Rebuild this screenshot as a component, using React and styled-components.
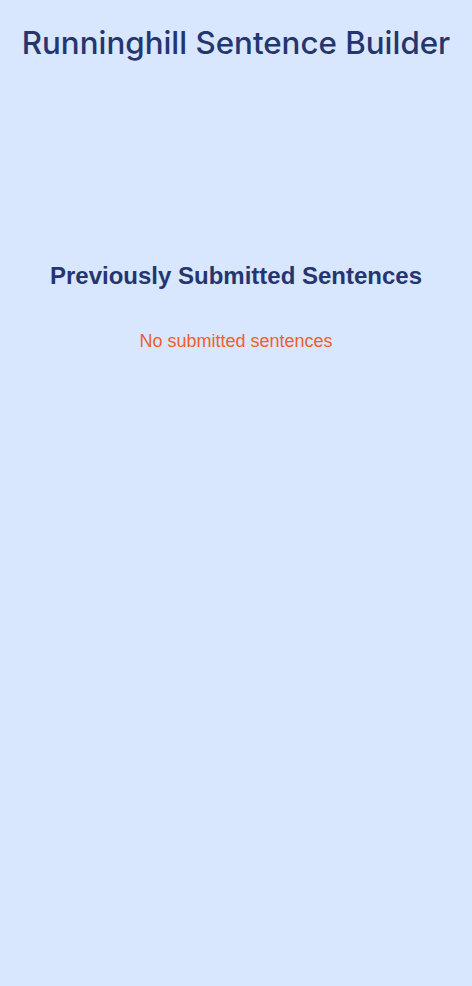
import React from "react";
import styled, { createGlobalStyle } from "styled-components";

const GlobalStyle = createGlobalStyle`
  html, body {
    margin: 0;
    padding: 0;
    background: #d8e7fd;
  }
  body {
    font-family: "Liberation Sans", Arial, sans-serif;
  }
`;

const Page = styled.div`
  min-height: 986px;
  background: #d8e7fd;
  display: flex;
  flex-direction: column;
  align-items: center;
  padding-top: 24px;
  box-sizing: border-box;
`;

const Title = styled.h1`
  margin: 0;
  font-family: Inter, "Noto Sans", sans-serif;
  font-weight: 500;
  font-size: 31.3px;
  line-height: 38px;
  color: #25366f;
  text-align: center;
  white-space: nowrap;
`;

const Section = styled.section`
  margin-top: 200px;
  display: flex;
  flex-direction: column;
  align-items: center;
  gap: 40px;
`;

const Heading = styled.h2`
  margin: 0;
  font-family: "Liberation Sans", Arial, sans-serif;
  font-weight: 700;
  font-size: 24px;
  line-height: 28px;
  color: #25366f;
  text-align: center;
`;

const Empty = styled.p`
  margin: 0;
  font-family: "Liberation Sans", Arial, sans-serif;
  font-size: 18px;
  line-height: 22px;
  color: #f05e2c;
  text-align: center;
`;

export default function App() {
  return (
    <>
      <GlobalStyle />
      <Page>
        <Title>Runninghill Sentence Builder</Title>
        <Section>
          <Heading>Previously Submitted Sentences</Heading>
          <Empty>No submitted sentences</Empty>
        </Section>
      </Page>
    </>
  );
}
